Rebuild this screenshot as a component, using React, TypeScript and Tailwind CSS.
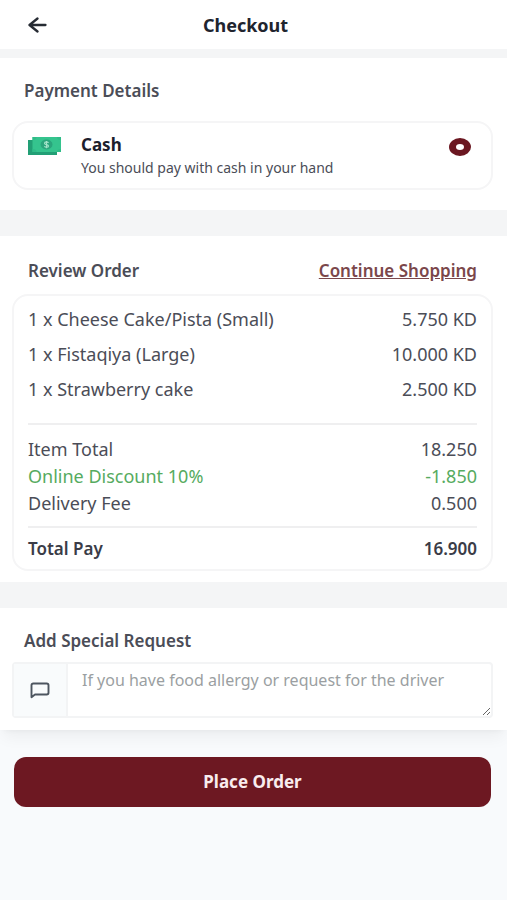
import { useState } from 'react'

const items = [
  { qty: 1, name: 'Cheese Cake/Pista (Small)', price: '5.750 KD' },
  { qty: 1, name: 'Fistaqiya (Large)', price: '10.000 KD' },
  { qty: 1, name: 'Strawberry cake', price: '2.500 KD' },
]

const charges = [
  { label: 'Item Total', amount: '18.250' },
  { label: 'Online Discount 10%', amount: '-1.850', discount: true },
  { label: 'Delivery Fee', amount: '0.500' },
]

function BackIcon() {
  return (
    <svg width="20" height="18" viewBox="0 0 20 18" fill="none" stroke="#262b33" strokeWidth="2.3" strokeLinecap="round" strokeLinejoin="round" aria-hidden="true">
      <path d="M17.500 9H1.500M9.500 2.500L1.500 9l8 6.500" />
    </svg>
  )
}

function CashIcon() {
  return (
    <svg width="34" height="20" viewBox="0 0 34 20" aria-hidden="true">
      <path d="M0 4h29v15H0z" fill="#229f75" />
      <path d="M4.500 1H33v15H4.500z" fill="#35c48e" />
      <path d="M4.500 4a4 3 0 0 0 4-3h-4zM33 4a4 3 0 0 1-4-3h4zM4.500 13a4 3 0 0 1 4 3h-4zM33 13a4 3 0 0 0-4 3h4z" fill="#2fbc88" />
      <ellipse cx="18.500" cy="8.500" rx="6" ry="5" fill="#2aa57c" />
      <path d="M20.500 6.900c-.5-.7-1.200-1-2-1-1.100 0-2 .5-2 1.300 0 1.800 4 1 4 2.800 0 .8-.9 1.300-2 1.300-.9 0-1.700-.4-2.100-1.100M18.500 4.900v7.400" fill="none" stroke="#a5e4ca" strokeWidth="1.100" />
    </svg>
  )
}

function MessageIcon() {
  return (
    <svg width="20" height="17" viewBox="0 0 20 17" fill="none" stroke="#4d555f" strokeWidth="1.9" strokeLinejoin="round" aria-hidden="true">
      <path d="M1.500 15.200V3.200q0-1.700 1.800-1.700h13.400q1.800 0 1.800 1.700v7.600q0 1.700-1.800 1.700H5z" />
    </svg>
  )
}

export default function App() {
  const [method, setMethod] = useState('cash')
  const [note, setNote] = useState('')

  return (
    <div className="min-h-screen bg-[#f8fafc] font-['Noto_Sans','Open_Sans',sans-serif] text-[17px] leading-6 text-[#4b4d57]">
      <div className="bg-[#f4f5f6]">
        <header className="grid h-[49px] grid-cols-[1fr_auto_1fr] items-center bg-white pr-11 pl-7">
          <button type="button" aria-label="Back" className="justify-self-start">
            <BackIcon />
          </button>
          <h1 className="text-lg font-bold text-[#20242e]">Checkout</h1>
        </header>

        {/* Payment */}
        <section className="mt-[9px] bg-white pt-[21px] pr-[14px] pb-5 pl-3">
          <h2 className="px-3 font-semibold">Payment Details</h2>
          <label className="mt-[18px] flex items-start rounded-2xl border-2 border-[#f5f5f6] px-[14px] pt-[11px] pb-[9px]">
            <span className="mt-[2px] w-[53px]">
              <CashIcon />
            </span>
            <span className="flex-1">
              <span className="block leading-[22px] font-bold text-[#1c202c]">Cash</span>
              <span className="block pt-px text-sm leading-[22px]">You should pay with cash in your hand</span>
            </span>
            <input
              type="radio"
              name="method"
              value="cash"
              checked={method === 'cash'}
              onChange={(e) => setMethod(e.target.value)}
              className="mt-1 mr-[6px] h-[18px] w-[22px] appearance-none rounded-[50%] border border-[#6b1721] checked:border-x-[7px] checked:border-y-[6px]"
            />
          </label>
        </section>

        {/* Order summary */}
        <section className="mt-[26px] bg-white pt-[23px] pr-[14px] pb-[11px] pl-3">
          <div className="flex items-center justify-between px-4">
            <h2 className="font-semibold">Review Order</h2>
            <a href="#" className="font-semibold text-[#7b474b] underline">
              Continue Shopping
            </a>
          </div>
          <div className="mt-[11px] rounded-2xl border-2 border-[#f5f5f6] px-[14px] pt-[5px]">
            <table className="mb-[17px] w-full text-lg">
              <tbody>
                {items.map((item) => (
                  <tr key={item.name} className="h-[35px]">
                    <td className="p-0 leading-6">
                      {item.qty} x {item.name}
                    </td>
                    <td className="p-0 text-right leading-6">{item.price}</td>
                  </tr>
                ))}
              </tbody>
            </table>
            <div className="border-y-2 border-[#efeff0] py-[10px]">
              <table className="w-full text-lg">
                <tbody>
                  {charges.map((charge) => (
                    <tr key={charge.label} className={charge.discount ? 'h-[27px] text-[#56ab60]' : 'h-[27px]'}>
                      <td className="p-0 leading-6">{charge.label}</td>
                      <td className="p-0 text-right leading-6">{charge.amount}</td>
                    </tr>
                  ))}
                </tbody>
              </table>
            </div>
            <div className="flex h-[41px] items-center justify-between font-semibold text-[#3a3c47]">
              <span>Total Pay</span>
              <span>16.900</span>
            </div>
          </div>
        </section>

        {/* Special request */}
        <section className="mt-[26px] bg-white pt-[21px] pr-[14px] pb-3 pl-3 shadow-lg shadow-black/5">
          <h2 className="px-3 font-semibold">
            <label htmlFor="note">Add Special Request</label>
          </h2>
          <div className="mt-[9px] flex rounded border-2 border-[#f3f4f5]">
            <span className="flex w-[54px] items-center justify-center border-r-2 border-[#f3f4f5] bg-[#f9fbfc]">
              <MessageIcon />
            </span>
            <textarea
              id="note"
              rows={2}
              value={note}
              onChange={(e) => setNote(e.target.value)}
              placeholder="If you have food allergy or request for the driver"
              className="block h-[52px] min-w-0 flex-1 px-[14px] py-1 text-base outline-none placeholder:text-[#9b9fa2]"
            />
          </div>
        </section>
      </div>

      <div className="pt-[27px] pr-4 pl-[14px]">
        <button type="button" className="h-[50px] w-full rounded-xl bg-[#6d1822] font-bold text-[#f9ecee]">
          Place Order
        </button>
      </div>
    </div>
  )
}
